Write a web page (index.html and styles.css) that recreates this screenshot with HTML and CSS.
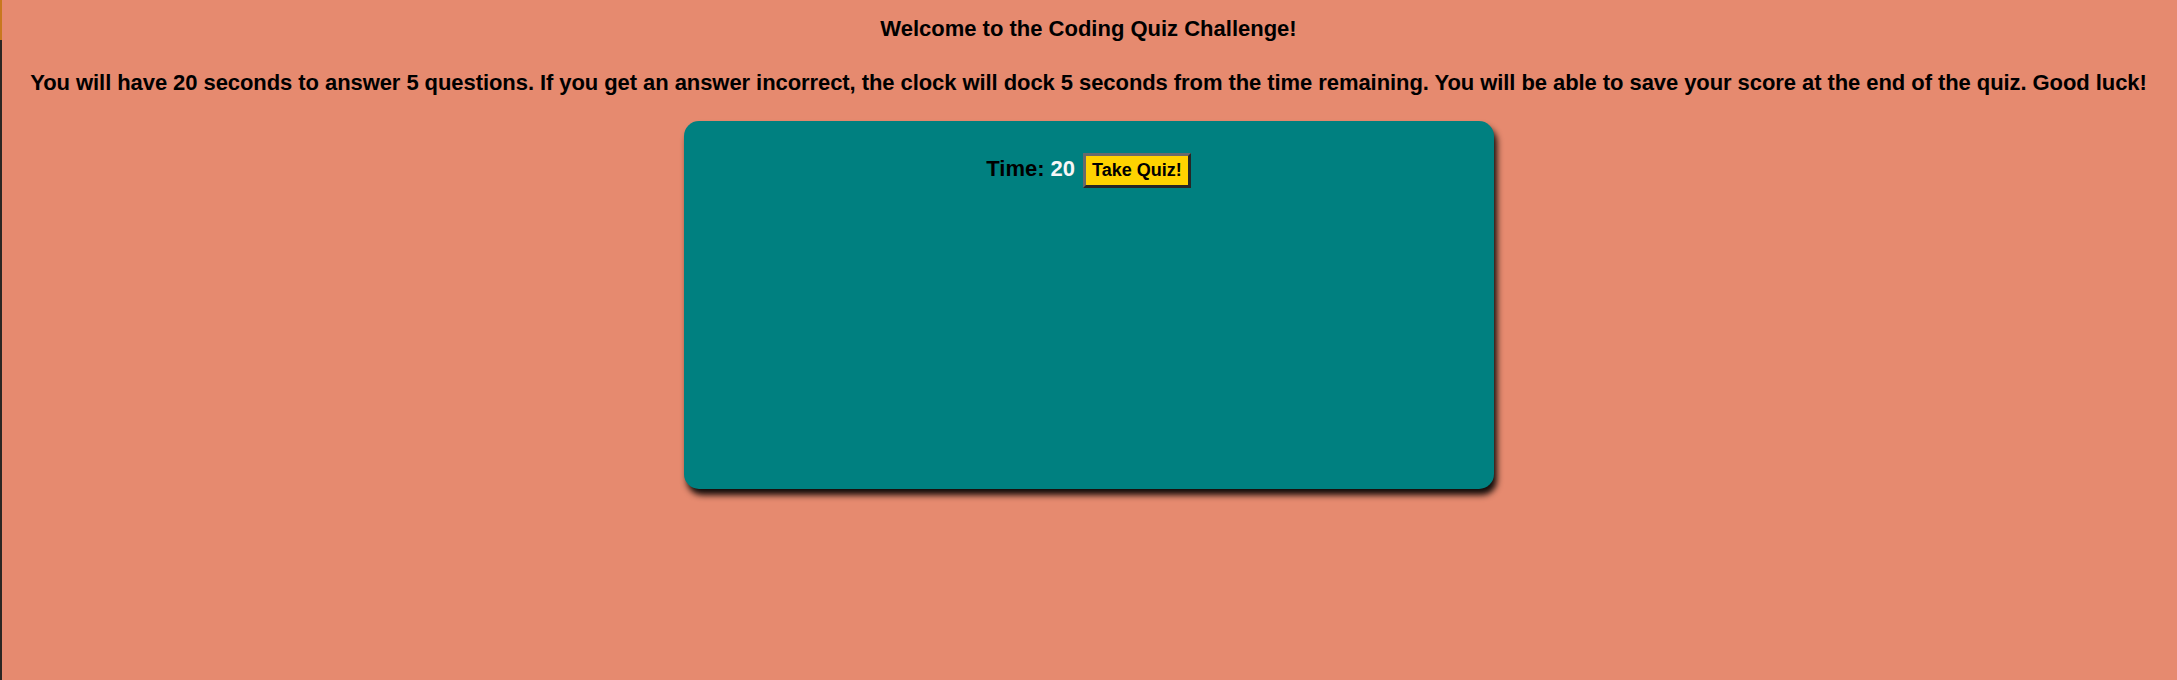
FILE: index.html
```html
<!DOCTYPE html>
<html lang="en">
<head>
<meta charset="utf-8">
<title>Coding Quiz</title>
<link rel="stylesheet" href="styles.css">
</head>
<body>
<header class="intro">
  <h1 class="title">Welcome to the Coding Quiz Challenge!</h1>
  <p class="rules">You will have 20 seconds to answer 5 questions. If you get an answer incorrect, the clock will dock 5 seconds from the time remaining. You will be able to save your score at the end of the quiz. Good luck!</p>
</header>
<main class="card">
  <div class="timer-row">
    <span class="timer-label">Time:</span>
    <span class="timer-value">20</span>
    <button class="start-btn" type="button">Take Quiz!</button>
  </div>
</main>
</body>
</html>
```
FILE: styles.css
```css
html {
  background: #e68a6f;
}

body {
  margin: 0;
  min-height: 680px;
  background: #e68a6f;
  color: #000;
  font-family: "Liberation Sans", Arial, sans-serif;
  font-weight: bold;
  font-size: 22px;
  line-height: 25px;
  text-align: center;
  position: relative;
}

body::before {
  content: "";
  position: absolute;
  left: 0;
  top: 0;
  width: 2px;
  height: 100%;
  background: linear-gradient(#c8781e 0 40px, #2b2622 40px);
}

.intro {
  padding-top: 16px;
}

.title {
  margin: 0;
  font-size: 22px;
  line-height: 25px;
  font-weight: bold;
}

.rules {
  margin: 29px 0 0;
  letter-spacing: -0.07px;
  white-space: nowrap;
}

.card {
  box-sizing: border-box;
  width: 810px;
  height: 368px;
  margin: 26px auto 0;
  padding-top: 32px;
  background: #008080;
  border-radius: 15px;
  box-shadow: 3px 6px 6px rgba(0, 0, 0, 0.92);
}

.timer-row {
  display: flex;
  justify-content: center;
  align-items: baseline;
  gap: 6px;
}

.timer-value {
  color: #f7f7f7;
}

.start-btn {
  margin-left: 2px;
  height: 35px;
  padding: 0 6px;
  box-sizing: border-box;
  background: #ffd300;
  color: #000;
  font-family: "Liberation Sans", Arial, sans-serif;
  font-weight: bold;
  font-size: 18px;
  line-height: 29px;
  border: 3px solid;
  border-color: #6a6a6a #262626 #262626 #6a6a6a;
  border-radius: 0;
  cursor: pointer;
}
```
